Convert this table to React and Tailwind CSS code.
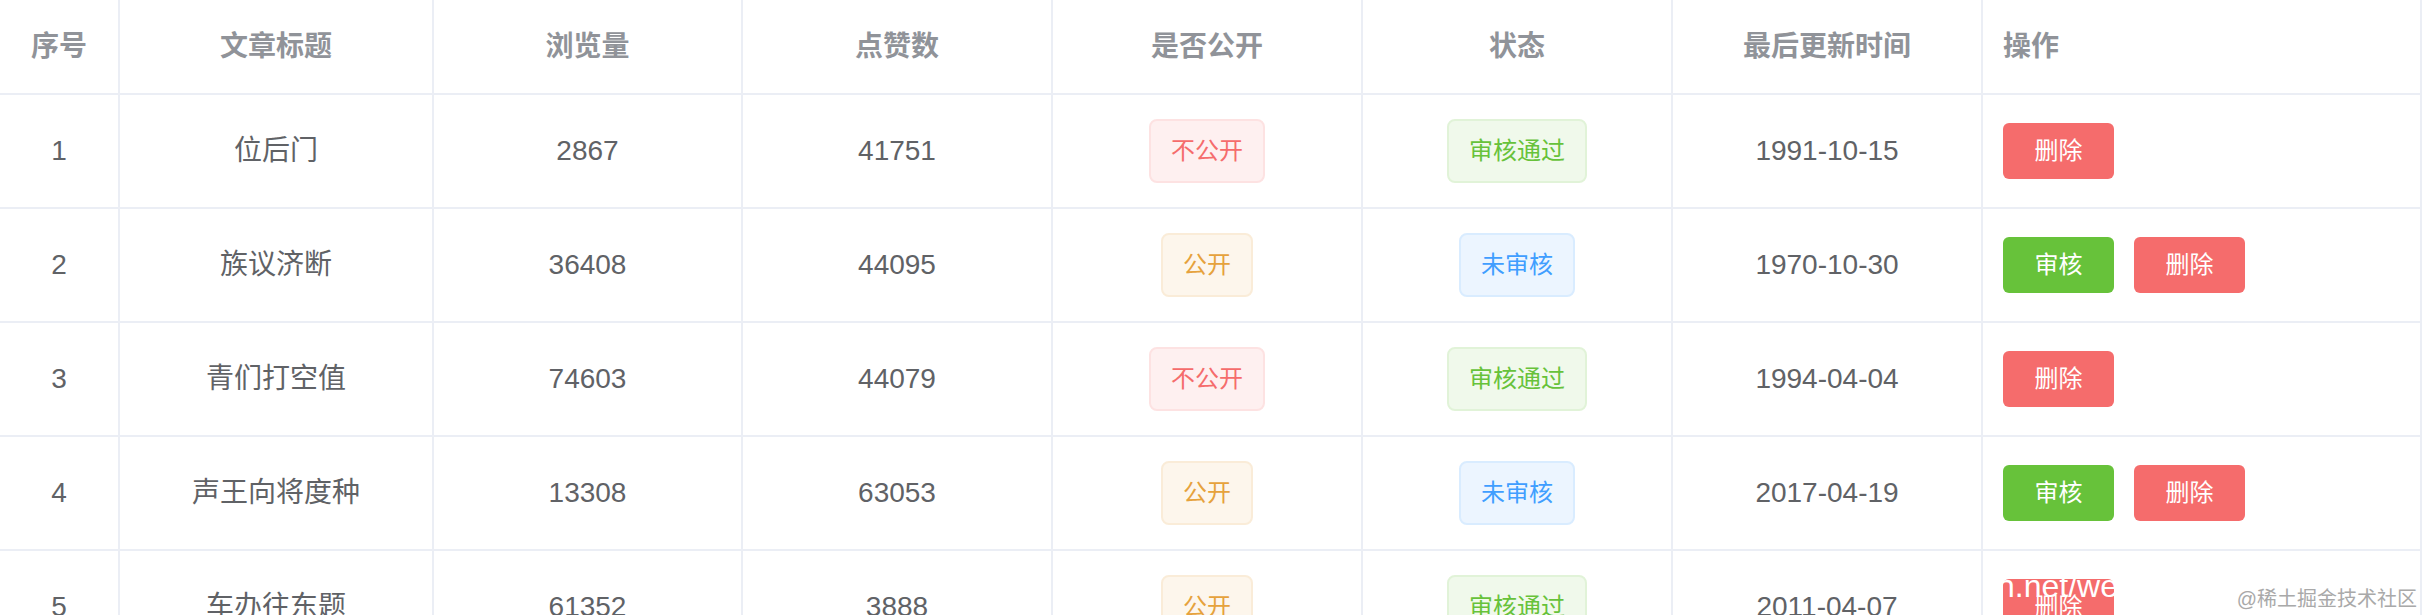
import React from "react";

const FONT = { fontFamily: '"Liberation Sans", "Noto Sans CJK SC", sans-serif' };

const rows = [
  { id: 1, title: "位后门", views: 2867, likes: 41751, pub: false, status: "pass", date: "1991-10-15" },
  { id: 2, title: "族议济断", views: 36408, likes: 44095, pub: true, status: "pending", date: "1970-10-30" },
  { id: 3, title: "青们打空值", views: 74603, likes: 44079, pub: false, status: "pass", date: "1994-04-04" },
  { id: 4, title: "声王向将度种", views: 13308, likes: 63053, pub: true, status: "pending", date: "2017-04-19" },
  { id: 5, title: "车办往东题", views: 61352, likes: 3888, pub: true, status: "pass", date: "2011-04-07" },
];

const GRID = "grid grid-cols-[120px_314px_309px_310px_310px_310px_310px_439px]";
const CELL = "flex items-center justify-center border-r-2 border-b-2 border-[#ebeef5]";

function Tag({ kind, children }) {
  const styles = {
    danger: "bg-[#fef0f0] border-[#fde2e2] text-[#f56c6c]",
    success: "bg-[#f0f9eb] border-[#e1f3d8] text-[#67c23a]",
    warning: "bg-[#fdf6ec] border-[#faecd8] text-[#e6a23c]",
    primary: "bg-[#ecf5ff] border-[#d9ecff] text-[#409eff]",
  };
  return (
    <span
      className={`inline-flex items-center h-[64px] px-[20px] border-2 rounded-[8px] text-[24px] leading-none ${styles[kind]}`}
    >
      {children}
    </span>
  );
}

function Btn({ kind, children }) {
  const c = kind === "success" ? "bg-[#67c23a]" : "bg-[#f56c6c]";
  return (
    <span className={`inline-flex items-center justify-center h-[56px] w-[111px] rounded-[6px] text-[24px] text-white ${c}`}>
      {children}
    </span>
  );
}

export default function App() {
  const headers = ["序号", "文章标题", "浏览量", "点赞数", "是否公开", "状态", "最后更新时间"];
  return (
    <div className="relative h-[615px] w-[2424px] overflow-hidden bg-white" style={FONT}>
      <div className={`${GRID} h-[95px]`}>
        {headers.map((h) => (
          <div key={h} className={`${CELL} text-[28px] font-bold text-[#909399]`}>
            {h}
          </div>
        ))}
        <div className="flex items-center justify-start pl-[20px] border-r-2 border-b-2 border-[#ebeef5] text-[28px] font-bold text-[#909399]">
          操作
        </div>
      </div>
      {rows.map((r) => (
        <div key={r.id} className={`${GRID} h-[114px] text-[28px] text-[#606266]`}>
          <div className={CELL}>{r.id}</div>
          <div className={CELL}>{r.title}</div>
          <div className={CELL}>{r.views}</div>
          <div className={CELL}>{r.likes}</div>
          <div className={CELL}>
            {r.pub ? <Tag kind="warning">公开</Tag> : <Tag kind="danger">不公开</Tag>}
          </div>
          <div className={CELL}>
            {r.status === "pass" ? <Tag kind="success">审核通过</Tag> : <Tag kind="primary">未审核</Tag>}
          </div>
          <div className={CELL}>{r.date}</div>
          <div className="relative flex items-center gap-[20px] pl-[20px] border-r-2 border-b-2 border-[#ebeef5]">
            {r.status === "pending" && <Btn kind="success">审核</Btn>}
            <Btn kind="danger">删除</Btn>
            {r.id === 5 && (
              <span className="absolute left-[14px] top-[19px] text-[32px] leading-[32px] text-white whitespace-nowrap">
                n.net/weixin
              </span>
            )}
          </div>
        </div>
      ))}
      <div className="absolute right-[7px] top-[589px] text-[20px] leading-[20px] text-[#a9a9a9] whitespace-nowrap">
        @稀土掘金技术社区
      </div>
    </div>
  );
}
